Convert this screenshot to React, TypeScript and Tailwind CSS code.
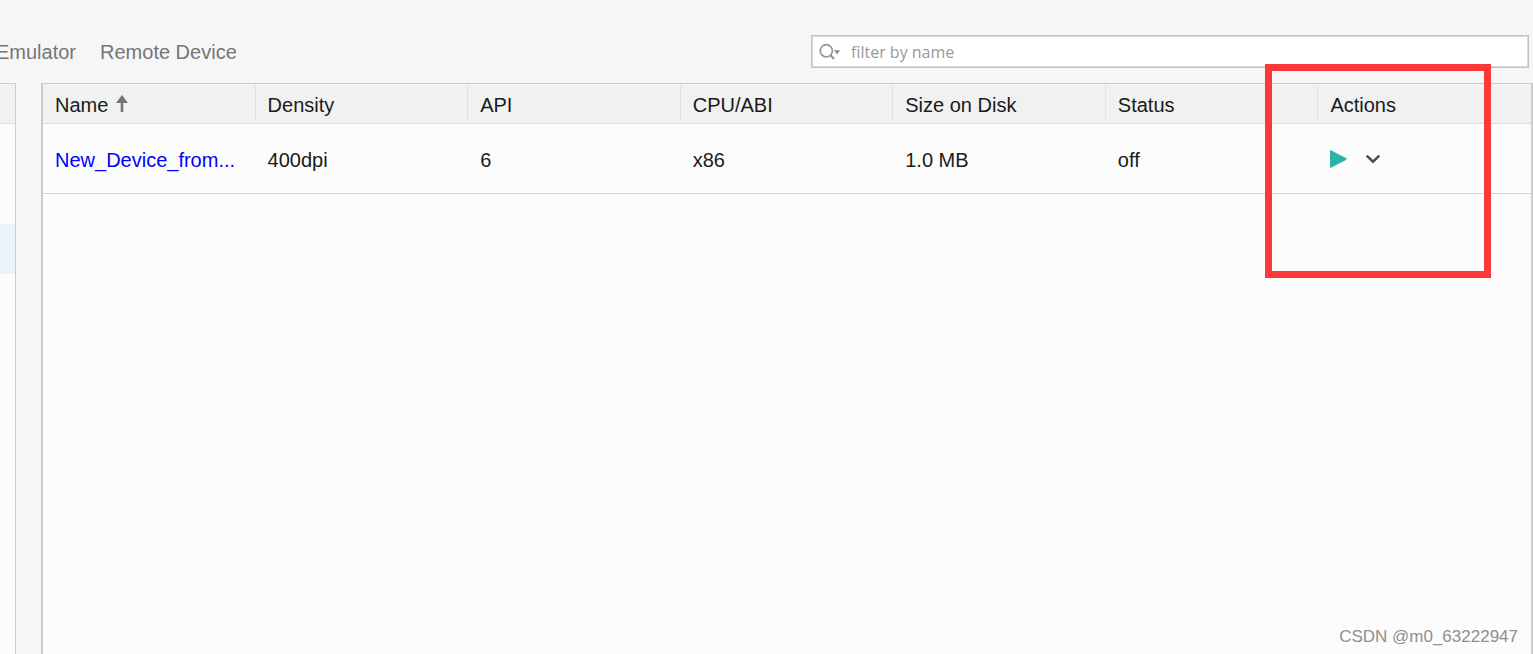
import React from 'react';

const columns = ['Name', 'Density', 'API', 'CPU/ABI', 'Size on Disk', 'Status', 'Actions'];

const devices = [
  { name: 'New_Device_from...', density: '400dpi', api: '6', abi: 'x86', size: '1.0 MB', status: 'off' },
];

function SortArrow() {
  return (
    <svg width="12" height="20" viewBox="0 0 12 20" className="shrink-0" aria-hidden="true">
      <path d="M6 0 L12 8 H7.3 V17 H4.7 V8 H0 Z" fill="#757575" />
    </svg>
  );
}

function SearchIcon() {
  return (
    <svg width="22" height="18" viewBox="0 0 22 18" className="shrink-0" aria-hidden="true">
      <circle cx="7.3" cy="7.8" r="6.1" fill="none" stroke="#8c979c" strokeWidth="1.7" />
      <path d="M11.3 12 L15 16" stroke="#8c979c" strokeWidth="2.2" />
      <path d="M15 7.3 H21 L18 11.3 Z" fill="#7d898f" />
    </svg>
  );
}

function Tabs() {
  return (
    <nav className="flex gap-6">
      <a href="#emulator" className="-ml-1 text-[#757575]">Emulator</a>
      <a href="#remote" className="text-[#757575]">Remote Device</a>
    </nav>
  );
}

function DeviceTable() {
  return (
    <table className="w-full table-fixed border-separate border-spacing-0 text-left text-[#1a1a1a]">
      <thead className="bg-[#f1f1f1]">
        <tr>
          {columns.map((label, i) => (
            <th key={label} scope="col" className="border-b border-[#dedede] p-0 pt-px pb-0.5 font-normal">
              <div className={`flex h-9 items-center gap-2 pt-1 pl-3 ${i < columns.length - 1 ? 'border-r border-[#e2e2e2]' : ''}`}>
                {label}
                {i === 0 && <SortArrow />}
              </div>
            </th>
          ))}
        </tr>
      </thead>
      <tbody>
        {devices.map((d) => (
          <tr key={d.name} className="h-[70px]">
            <td className="border-b border-[#d6d6d6] px-3 pt-0.5">
              <a href="#device" className="block text-[#0000ff]">{d.name}</a>
            </td>
            {[d.density, d.api, d.abi, d.size, d.status].map((value) => (
              <td key={value} className="border-b border-[#d6d6d6] px-3 pt-0.5">{value}</td>
            ))}
            <td className="border-b border-[#d6d6d6] px-[11px]">
              <div className="flex items-center gap-4">
                <button type="button" aria-label="Start" className="p-px">
                  <svg width="17" height="18" viewBox="0 0 17 18" aria-hidden="true">
                    <path d="M0 1 Q0 -0.3 1.3 0.4 L16 8.1 Q17 9 16 9.9 L1.3 17.6 Q0 18.3 0 17 Z" fill="#2bb3a9" />
                  </svg>
                </button>
                <button type="button" aria-label="More actions" className="p-px">
                  <svg width="16" height="10" viewBox="0 0 16 10" fill="none" aria-hidden="true">
                    <path d="M1.7 1.7 L8 7.7 L14.3 1.7" stroke="#4d4d4d" strokeWidth="2.5" />
                  </svg>
                </button>
              </div>
            </td>
          </tr>
        ))}
      </tbody>
    </table>
  );
}

export default function App() {
  return (
    <div className="relative flex min-h-screen flex-col overflow-hidden bg-[#f6f6f6] font-['Liberation_Sans',Arial,sans-serif] text-[20px] leading-6">
      <header className="flex items-center justify-between pt-[35px] pr-1 pb-[15px]">
        <Tabs />
        <label className="flex h-[33px] w-[47%] max-w-[718px] items-center gap-2 border border-[#c2c2c2] bg-white pl-[7px] inset-ring inset-ring-[#dadada]">
          <SearchIcon />
          <input
            type="text"
            aria-label="Filter by name"
            placeholder="filter by name"
            className="min-w-0 flex-1 bg-transparent pl-0.5 font-['Open_Sans',sans-serif] text-[16px] outline-none placeholder:text-[#999999]"
          />
        </label>
      </header>

      <div className="flex flex-1">
        <aside className="w-4 border-t border-r border-[#cccccc] bg-[#fcfcfc]">
          <div className="h-10 border-b border-[#dedede] bg-[#f1f1f1]" />
          <div className="mt-[100px] h-[50px] bg-[#eaf3fc]" />
        </aside>
        <main className="ml-[25px] flex-1 border-x-2 border-t border-[#cccccc] bg-[#fcfcfc]">
          <DeviceTable />
        </main>
      </div>

      <div className="pointer-events-none absolute top-16 right-[42px] h-[214px] w-[226px] border-[7px] border-[#fd3838]" />
      <p className="absolute right-[15px] bottom-[5px] text-[17px] text-[#8f8f8f]">CSDN @m0_63222947</p>
    </div>
  );
}
